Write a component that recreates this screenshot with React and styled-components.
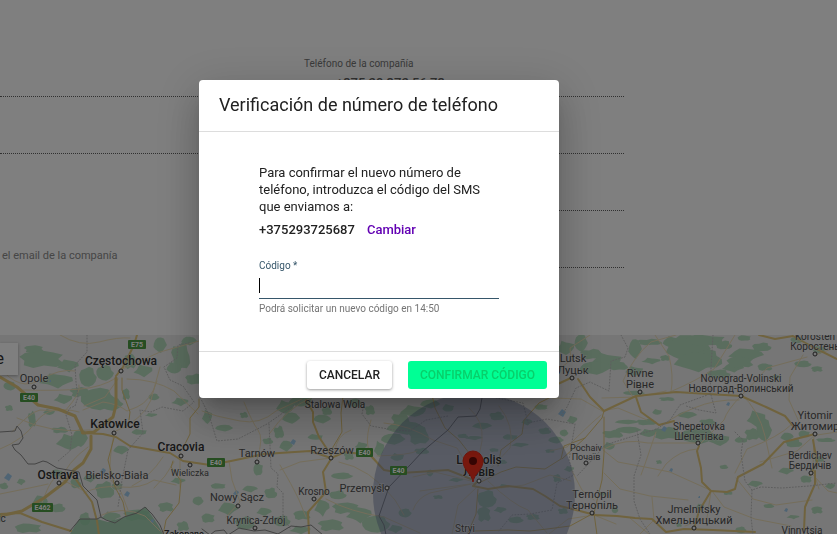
import React from "react";
import styled, { createGlobalStyle } from "styled-components";

const GlobalStyle = createGlobalStyle`
  *, *::before, *::after { box-sizing: border-box; }
  body {
    margin: 0;
    background: #fff;
    color: #212121;
    font-family: Roboto, "Liberation Sans", sans-serif;
    overflow: hidden;
  }
`;

const Page = styled.main`
  display: flex;
  flex-direction: column;
  min-height: 100vh;
`;

const Details = styled.section`
  display: grid;
  grid-template-columns: minmax(0, 284fr) minmax(0, 320fr) minmax(0, 193fr);
  column-gap: 20px;
  padding: 40px 0 67px;
`;

const Column = styled.div`
  display: flex;
  flex-direction: column;
`;

const Field = styled.div`
  display: flex;
  flex-direction: column;
  gap: 4px;
  height: 57px;
  padding-top: 17px;
  border-bottom: 1px ${(p) => (p.$line ? "dotted #616161" : "solid transparent")};
  font-size: 10px;
  line-height: 14px;
  color: #757575;
`;

const PhoneValue = styled.div`
  padding-left: 32px;
  font-size: 13px;
  font-weight: 500;
  line-height: 16px;
  color: #616161;
`;

const Hint = styled.div`
  padding: 38px 0 0 2px;
  font-size: 11px;
  line-height: 14px;
  color: #8c8c8c;
`;

const MapPanel = styled.section`
  position: relative;
  flex: 1;
  min-height: 199px;
  background: #ececec;
  overflow: hidden;
`;

const MapDrawing = styled.svg`
  display: block;
  width: 100%;
  height: 199px;
  font-family: Roboto, sans-serif;
`;

const MapType = styled.button`
  position: absolute;
  top: 8px;
  left: 0;
  display: flex;
  justify-content: flex-end;
  width: 18px;
  height: 32px;
  padding: 0 14px 0 0;
  border: 0;
  background: #fff;
  box-shadow: 0 1px 3px rgba(0, 0, 0, 0.3);
  color: #333;
  font: 400 16px/32px Roboto, sans-serif;
  overflow: hidden;
`;

const Backdrop = styled.div`
  position: fixed;
  inset: 0;
  display: grid;
  place-items: center;
  padding: 0 79px 56px 0;
  background: rgba(0, 0, 0, 0.5);
`;

const Dialog = styled.form`
  width: 360px;
  max-width: 100%;
  border-radius: 4px;
  background: #fff;
  box-shadow: 0 11px 15px -7px rgba(0, 0, 0, 0.2), 0 24px 38px 3px rgba(0, 0, 0, 0.14),
    0 9px 46px 8px rgba(0, 0, 0, 0.12);
`;

const Title = styled.h2`
  margin: 0;
  padding: 13px 20px 14px;
  border-bottom: 1px solid #ddd;
  font-size: 18px;
  font-weight: 400;
  line-height: 24px;
`;

const Content = styled.div`
  padding: 32px 60px 35px;
`;

const Message = styled.p`
  margin: 0;
  font-size: 13px;
  line-height: 17px;
`;

const PhoneRow = styled.div`
  display: flex;
  gap: 12px;
  margin-top: 6px;
  font-size: 13px;
  font-weight: 500;
  line-height: 17px;
`;

const ChangeLink = styled.a`
  color: #6200b3;
  text-decoration: none;
`;

const CodeField = styled.div`
  position: relative;
  display: flex;
  flex-direction: column;
  margin-top: 21px;
`;

const CodeLabel = styled.label`
  font-size: 10px;
  line-height: 14px;
  color: #36566a;
`;

const CodeInput = styled.input`
  width: 100%;
  height: 26px;
  padding: 0;
  border: 0;
  border-bottom: 1px solid #36566a;
  border-radius: 0;
  outline: 0;
  background: transparent;
  caret-color: transparent;
  font: 400 13px/17px Roboto, sans-serif;
`;

const Caret = styled.span`
  position: absolute;
  top: 19px;
  left: 0;
  width: 1px;
  height: 15px;
  background: #000;
`;

const Helper = styled.small`
  margin-top: 3px;
  font-size: 10px;
  line-height: 14px;
  color: #757575;
`;

const Actions = styled.footer`
  display: flex;
  justify-content: flex-end;
  gap: 16px;
  padding: 9px 12px;
  border-top: 1px solid #ddd;
`;

const Button = styled.button`
  height: 28px;
  padding: 0 12px;
  border: 0;
  border-radius: 3px;
  background: ${(p) => (p.$primary ? "#00ff95" : "#fff")};
  color: ${(p) => (p.$primary ? "#08cf6b" : "#212121")};
  box-shadow: ${(p) => (p.$primary ? "none" : "0 1px 3px rgba(0, 0, 0, 0.4)")};
  font: 500 12px/28px Roboto, sans-serif;
  text-transform: uppercase;
`;

/* Forests: centre x, centre y, half width, half height */
const forests = [
  [42, 359, 23, 9], [68, 366, 10, 6], [88, 377, 8, 9], [34, 349, 10, 4], [56, 381, 16, 7],
  [105, 373, 8, 7], [130, 361, 6, 8], [143, 371, 9, 6], [98, 399, 16, 10], [80, 392, 10, 5],
  [63, 399, 9, 5], [111, 404, 11, 6], [32, 419, 4, 8], [69, 442, 13, 8], [80, 438, 7, 8],
  [60, 430, 8, 3], [49, 412, 6, 3], [160, 345, 6, 7], [181, 356, 9, 13], [174, 368, 8, 6],
  [189, 341, 7, 4], [195, 379, 9, 5], [139, 432, 8, 3], [121, 450, 7, 4], [105, 490, 9, 8],
  [117, 486, 6, 4], [90, 478, 6, 4], [76, 483, 5, 5], [57, 473, 6, 4], [40, 502, 7, 6],
  [58, 508, 7, 4], [28, 528, 14, 5], [21, 482, 4, 3], [4, 486, 4, 3], [137, 515, 14, 6],
  [111, 517, 9, 5], [85, 519, 5, 6], [166, 507, 8, 5], [178, 481, 7, 3], [154, 397, 5, 3],
  [126, 394, 4, 6], [180, 402, 8, 4], [10, 386, 6, 4], [9, 408, 4, 3], [151, 415, 6, 2],
  [198, 501, 5, 4], [183, 526, 6, 5], [207, 417, 5, 7], [224, 428, 8, 3], [244, 415, 4, 3],
  [285, 407, 9, 7], [291, 418, 8, 5], [279, 432, 5, 6], [300, 401, 12, 6], [322, 419, 8, 4],
  [327, 411, 5, 4], [315, 437, 8, 3], [286, 446, 6, 5], [268, 441, 5, 3], [258, 469, 5, 7],
  [250, 489, 7, 3], [271, 493, 6, 5], [218, 486, 8, 3], [228, 509, 9, 6], [245, 523, 9, 6],
  [208, 518, 7, 5], [264, 512, 7, 4], [282, 521, 8, 5], [302, 515, 9, 5], [322, 508, 7, 8],
  [338, 495, 8, 4], [346, 508, 14, 6], [359, 515, 12, 8], [376, 524, 13, 8], [331, 525, 13, 6],
  [300, 530, 10, 4], [342, 476, 10, 3], [349, 456, 5, 4], [361, 446, 6, 4], [355, 403, 6, 4],
  [370, 410, 5, 5], [379, 449, 5, 8], [393, 439, 11, 5], [401, 420, 9, 8], [413, 411, 13, 6],
  [430, 404, 9, 4], [419, 435, 10, 9], [397, 457, 7, 4], [405, 428, 17, 6], [422, 451, 7, 3],
  [448, 408, 6, 4], [482, 426, 9, 3], [497, 416, 7, 4], [510, 437, 8, 3], [527, 422, 5, 3],
  [545, 431, 6, 3], [541, 407, 7, 3], [474, 438, 8, 2], [463, 436, 5, 2], [494, 450, 5, 2],
  [520, 445, 8, 2], [502, 462, 5, 2], [550, 451, 5, 2], [456, 480, 7, 2], [487, 499, 9, 8],
  [484, 514, 7, 8], [500, 510, 6, 3], [516, 520, 7, 3], [533, 517, 7, 3], [395, 529, 7, 4],
  [405, 513, 6, 4], [438, 497, 5, 2], [503, 486, 4, 2], [430, 473, 3, 3], [563, 511, 5, 3],
  [565, 348, 9, 7], [581, 343, 6, 8], [592, 354, 11, 5], [606, 361, 15, 8], [595, 368, 14, 6],
  [618, 366, 10, 4], [634, 371, 9, 5], [635, 349, 6, 9], [650, 342, 12, 3], [673, 342, 11, 6],
  [688, 349, 20, 13], [705, 359, 17, 9], [704, 340, 21, 6], [696, 362, 20, 9], [724, 345, 8, 4],
  [744, 338, 7, 3], [746, 355, 16, 6], [762, 347, 9, 4], [765, 367, 8, 4], [733, 368, 10, 4],
  [719, 374, 11, 4], [740, 362, 14, 6],
  [776, 377, 5, 2], [803, 364, 8, 3], [817, 369, 6, 3], [819, 350, 6, 4], [797, 340, 6, 3],
  [665, 358, 5, 3], [651, 361, 9, 3], [634, 393, 10, 2], [667, 399, 8, 2], [756, 419, 9, 8],
  [764, 430, 7, 10], [752, 434, 7, 6], [719, 440, 10, 6], [698, 436, 17, 7], [667, 433, 14, 6],
  [648, 433, 9, 4], [628, 430, 12, 3], [613, 434, 10, 4], [609, 446, 6, 4], [627, 422, 11, 2],
  [647, 422, 10, 3], [657, 412, 5, 3], [687, 415, 9, 3], [708, 422, 8, 3], [741, 440, 7, 3],
  [787, 437, 6, 4], [794, 443, 8, 4], [804, 434, 6, 4], [786, 471, 7, 3], [826, 440, 9, 2],
  [806, 479, 6, 4], [755, 484, 7, 3], [724, 467, 4, 2], [728, 493, 5, 2], [700, 507, 4, 3],
  [769, 506, 5, 2], [817, 510, 6, 4], [793, 517, 6, 2], [741, 530, 5, 3], [679, 525, 3, 2],
  [602, 494, 4, 2], [615, 510, 3, 3], [659, 462, 3, 2], [572, 420, 5, 4], [564, 433, 4, 3],
  [557, 478, 4, 4], [569, 469, 5, 3], [556, 440, 7, 3], [819, 459, 5, 3], [830, 486, 5, 3],
];

const forestPath = ([cx, cy, rx, ry], seed) => {
  const points = [];
  for (let k = 0; k < 13; k += 1) {
    const a = (k / 13) * Math.PI * 2;
    const r = 0.7 + 0.45 * Math.abs(Math.sin(seed * 7.3 + k * k * 2.1));
    points.push(`${Math.round((cx + Math.cos(a) * rx * r) * 10) / 10} ${Math.round((cy + Math.sin(a) * ry * r) * 10) / 10}`);
  }
  return `M${points.join("L")}Z`;
};

const lakes = [
  [8, 477, 4], [127, 494, 3], [152, 521, 2], [50, 381, 1], [236, 493, 3], [293, 442, 3],
  [562, 413, 4], [664, 429, 3], [728, 404, 2], [671, 470, 2], [786, 510, 2], [699, 497, 1], [103, 471, 3],
];

const thinRoads = [
  "M0 368Q20 392 40 380T75 371M60 335Q80 347 99 342T130 338M23 390Q60 391 81 389T116 378",
  "M12 432Q30 412 40 410L65 411Q82 392 79 385M17 418Q51 434 90 430",
  "M0 449Q23 440 36 422T79 412M83 410L103 402Q118 404 127 411L137 407Q151 401 157 381",
  "M118 379Q110 390 105 397L84 406M127 379Q154 379 174 391L198 414M118 371L160 352L199 341",
  "M114 434Q109 457 110 479L121 492L128 510M114 432Q143 420 151 400L160 367",
  "M59 483Q67 462 88 447M42 503Q52 474 59 478L82 490M0 494Q35 487 48 484",
  "M84 493Q99 485 120 487T154 480L176 485M99 516Q122 505 145 516L160 531",
  "M174 462L165 476L154 488M163 457Q150 477 132 486M180 451L180 487",
  "M229 461L232 480L240 502L226 517M257 459Q264 438 258 430T244 402M202 411L217 416L240 421Q260 425 276 411L302 399",
  "M280 465Q292 485 299 500L306 517M335 452Q336 435 351 430M311 398Q287 408 270 433",
  "M331 458L300 462L280 470M339 462Q370 468 395 500L404 515M326 499Q350 512 384 517L420 533",
  "M377 456Q410 455 417 451M371 420Q362 449 375 459M384 423Q409 425 433 440L457 448L473 475",
  "M469 408Q484 421 482 441L475 475M499 406Q515 426 510 448L481 479",
  "M413 477L435 472L471 481M420 491L470 484M413 510Q417 498 430 493L476 483",
  "M488 481Q513 505 528 510L547 533M476 488L458 505L452 534M501 488L524 485L550 475L571 481",
  "M554 373L571 360L570 348L590 335M604 412L581 399L552 398M602 398L637 397L666 391",
  "M602 411L618 408L647 420M633 397L623 381Q633 357 651 342L676 335",
  "M671 392Q674 376 669 356L655 335M670 392Q696 381 714 369L735 335M741 396Q757 380 767 368L807 357",
  "M741 396Q727 410 724 420L701 443M739 400Q715 399 694 408T669 421",
  "M741 394Q759 410 765 436L772 468M792 424Q779 437 747 449L735 473M601 415Q590 424 567 447L550 451",
  "M603 450L618 462L645 467L670 472L710 490M606 448Q625 438 648 443L698 443",
  "M604 473L620 489L650 496L688 500M652 497L654 520L640 534M656 432L645 464L641 475",
  "M711 491L707 518L685 526M712 491L724 507L755 519L791 526M736 478L753 499L776 505L812 500",
  "M697 449Q680 450 666 464L658 476M816 434L797 451L760 462M817 435L837 432M814 433L813 470L819 489",
  "M800 424L789 400L790 377L803 355M815 355L837 347M813 475L828 491L837 493",
  "M594 500L582 490L572 471M549 534L568 519L594 515L616 524M630 518L650 535",
];

const mainRoads = [
  ["M116 378L116 405L113 417L94 432L83 433L75 416L58 409L38 405L17 387L0 377", 3],
  ["M82 433L103 434L116 437L130 446L170 453L183 461L210 465L231 461L264 454L310 451L331 458L345 452L370 455L384 470L401 473L448 470L471 479", 2],
  ["M91 436L91 449L83 463L74 470L65 482L44 498L22 511L0 516", 3],
  ["M114 438L108 460L115 487L123 502L126 516", 1],
  ["M122 378L122 390L130 412L129 420", 1],
  ["M134 345L137 335M134 345L123 367L116 376", 2],
  ["M0 514L20 513L42 522L71 531M75 478L84 491L92 502L97 521L99 535", 2],
  ["M199 399L199 407L190 418L190 434L183 448M173 461L171 467L181 481L179 503L166 520L163 535", 1],
  ["M343 396L341 413L342 432L333 447L331 457", 1],
  ["M306 400L313 412L313 422L319 437L331 455M331 459L323 472L326 492L308 512L309 535", 2],
  ["M432 395L435 408L445 428L459 440L476 462", 1],
  ["M555 395L539 403L524 420L522 434L501 450L498 466M479 483L501 472L516 467L545 469L561 459L564 446L585 438", 1],
  ["M477 482L473 486L488 489L508 486L533 489L545 496L560 506L580 511L595 515", 2],
  ["M478 489L476 514L467 535M475 531L508 530L530 531L547 529L570 526L592 514", 1],
  ["M578 379L590 397L604 411L636 396L676 392L741 396L766 407L785 416L794 427", 2],
  ["M636 397L641 412L659 425L674 421", 2],
  ["M604 411L602 418L585 438L562 459M604 417L604 453L602 480L594 513L597 535", 1],
  ["M553 387L560 383L573 377", 2],
  ["M699 446L697 451L701 468L702 482L711 491L699 511L694 529", 2],
  ["M711 491L727 492L735 489L738 477L763 464L784 442L815 434", 2],
  ["M815 471L815 484L805 507L804 530M813 440L817 462L810 475", 2],
  ["M594 515L617 516L635 518L652 519L666 532L684 529L713 530L755 532", 2],
  ["M759 335L775 339L793 336L811 346L837 359", 2],
];

const borders = [
  "M0 432L15 431L17 426L21 431L23 438L19 444L12 445L15 450L21 455L28 464L35 464L43 461L47 462L57 468L79 472L83 486L97 500L101 517L97 519L80 519L70 531",
  "M101 517L106 520L115 523L124 517L137 513L145 507L152 514L160 525L164 535M202 529L210 535L215 531L224 530L228 535L239 528L254 531L265 530L278 534L291 526L301 527L311 525L323 535",
  "M482 398L480 409L476 416L458 417L448 430L423 451L410 465L389 487L379 516L384 525L386 535",
];

const regions = [
  "M87 335L87 352L75 365L76 382L78 397L75 406L70 408L66 415L72 435L70 451L57 462",
  "M189 343L178 345L177 358L164 367L170 380L183 386L194 402L183 411L162 407L151 412L140 410L143 433L128 450L122 480L118 507",
  "M199 395L209 415L217 441L238 439L267 424L303 399M269 424L271 468L278 474L277 487L283 493L283 518L290 528",
  "M364 404L362 414L371 426L394 430L410 431L426 420L448 416M496 398L523 403L528 423L547 419L575 424L569 460L574 475L557 483L552 510L530 514L512 515L499 531",
  "M621 335L628 348L625 357L611 361L609 391L590 382L576 388L567 407L561 416",
  "M713 335L711 368L710 394L680 405L670 420L657 429L640 434L605 445L594 458L577 476",
  "M711 395L716 413L699 410L686 406M637 431L641 455L634 476L634 501L640 519L650 534",
  "M735 432L743 440L741 454L745 481L752 490L761 487L782 488L809 486L837 483M752 490L751 517L753 535",
];

const labels = [
  ["Częstochowa", 121, 365, 12, 500], ["Opole", 34, 382, 11, 400], ["Katowice", 115, 428, 12, 500],
  ["Cracovia", 181, 451, 12, 500], ["Wieliczka", 190, 476, 9, 400], ["Ostrava", 58, 479, 12, 500],
  ["Bielsko-Biała", 117, 479, 11, 400], ["Zakopane", 184, 537, 9, 500], ["ic", 2, 522, 10, 400],
  ["Stalowa Wola", 335, 408, 10, 400], ["Tarnów", 257, 457, 11, 400], ["Rzeszów", 332, 454, 11, 400],
  ["Nowy Sącz", 237, 501, 11, 400], ["Krosno", 314, 495, 10, 400], ["Przemyśl", 362, 492, 11, 400],
  ["Krynica-Zdrój", 256, 524, 10, 400], ["Leópolis", 479, 464, 12, 500], ["Львів", 479, 476, 12, 500],
  ["Stryi", 465, 532, 10, 400], ["Lutsk", 573, 362, 11, 400], ["Луцьк", 573, 374, 11, 400],
  ["Rivne", 640, 377, 11, 400], ["Рівне", 640, 388, 11, 400], ["Pochaiv", 586, 451, 9, 400],
  ["Почаїв", 586, 460, 9, 400], ["Novograd-Volinski", 741, 382, 10, 400],
  ["Новоград-Волинський", 741, 392, 10, 400], ["Korosten", 815, 340, 10, 400], ["Коростень", 815, 350, 10, 400],
  ["Shepetovka", 699, 430, 10, 400], ["Шепетівка", 699, 440, 10, 400], ["Yitomir", 815, 419, 11, 400],
  ["Житомир", 815, 430, 11, 400], ["Berdichev", 810, 459, 10, 400], ["Бердичів", 810, 469, 10, 400],
  ["Ternópil", 592, 498, 11, 400], ["Тернопіль", 592, 509, 11, 400], ["Jmelnitsky", 694, 513, 11, 400],
  ["Хмельницький", 694, 524, 11, 400], ["Vinnytsia", 802, 534, 10, 400],
];

const towns = [
  [121, 371], [34, 387], [114, 433], [181, 456], [190, 465], [59, 483], [117, 483], [257, 462],
  [331, 458], [238, 506], [314, 499], [387, 488], [255, 528], [479, 481], [572, 378], [640, 392],
  [586, 463], [741, 396], [815, 354], [698, 443], [815, 434], [811, 473], [592, 513], [694, 528],
];

const shields = [["E75", 128, 340, 18], ["E40", 20, 393, 18], ["E462", 32, 503, 21], ["E40", 207, 458, 18], ["E40", 356, 448, 17], ["E40", 390, 466, 17]];

function CoverageMap() {
  return (
    <MapPanel aria-label="Mapa">
      <MapDrawing viewBox="0 335 837 199" preserveAspectRatio="xMidYMin slice" aria-hidden="true">
        <rect x="0" y="335" width="837" height="199" fill="#ececec" />
        <g fill="#b4dabc">
          {forests.map((f, i) => <path key={i} d={forestPath(f, i)} />)}
        </g>
        <path d="M70 534L79 519H97L108 522L124 517L146 507L158 525L163 534Z" fill="#94cba5" opacity=".8" />
        <g fill="#9fc9e8">
          {lakes.map(([x, y, r]) => <path key={`${x}-${y}`} d={`M${x - r} ${y + 1}L${x} ${y - r}L${x + r} ${y - 1}L${x + 1} ${y + r}Z`} />)}
        </g>
        <g fill="none" strokeLinejoin="round" strokeLinecap="round">
          {thinRoads.map((d) => <path key={d} d={d} stroke="#ebdcb6" strokeWidth="1" />)}
          {mainRoads.map(([d, w]) => <path key={d} d={d} stroke="#e0c67c" strokeWidth={w} />)}
          {regions.map((d) => <path key={d} d={d} stroke="#bdbdbd" strokeWidth="1" strokeDasharray="1 2" />)}
          {borders.map((d) => <path key={d} d={d} stroke="#888" strokeWidth="1" />)}
        </g>
        <circle cx="474" cy="494" r="101" fill="#5b6a94" fillOpacity=".4" />
        {shields.map(([name, x, y, w]) => (
          <g key={`${x}-${y}`}>
            <rect x={x} y={y} width={w} height="9" rx="1" fill="#4c9a42" />
            <text x={x + w / 2} y={y + 7} textAnchor="middle" fontSize="7" fontWeight="700" fill="#fff">{name}</text>
          </g>
        ))}
        {towns.map(([x, y]) => <circle key={`${x}-${y}`} cx={x} cy={y} r="2" fill="#eee" stroke="#3c3c3c" strokeWidth="1" />)}
        {labels.map(([name, x, y, size, weight]) => (
          <text key={name} x={x} y={y} textAnchor="middle" fontSize={size} fontWeight={weight}
            fill={weight === 500 ? "#303030" : "#505050"} stroke="#f3f3f3" strokeWidth="1" strokeOpacity=".5" paintOrder="stroke">
            {name}
          </text>
        ))}
        <path d="M473 482C472 474 463 470 463 461A10 10 0 0 1 483 461C483 470 474 474 473 482Z" fill="#f0301c" stroke="#dc2c1c" strokeWidth="1" />
        <circle cx="473" cy="461" r="4" fill="#6b0b06" />
      </MapDrawing>
      <MapType type="button">e</MapType>
    </MapPanel>
  );
}

function VerificationDialog() {
  return (
    <Backdrop>
      <Dialog role="dialog" aria-modal="true" aria-labelledby="dialog-title" onSubmit={(e) => e.preventDefault()}>
        <Title id="dialog-title">Verificación de número de teléfono</Title>
        <Content>
          <Message>
            Para confirmar el nuevo número de teléfono, introduzca el código del SMS que enviamos a:
          </Message>
          <PhoneRow>
            <span>+375293725687</span>
            <ChangeLink href="#cambiar">Cambiar</ChangeLink>
          </PhoneRow>
          <CodeField>
            <CodeLabel htmlFor="code">Código *</CodeLabel>
            <CodeInput id="code" type="text" inputMode="numeric" autoFocus required aria-describedby="code-help" />
            <Caret />
            <Helper id="code-help">Podrá solicitar un nuevo código en 14:50</Helper>
          </CodeField>
        </Content>
        <Actions>
          <Button type="button">Cancelar</Button>
          <Button type="submit" $primary disabled>Confirmar código</Button>
        </Actions>
      </Dialog>
    </Backdrop>
  );
}

export default function App() {
  return (
    <>
      <GlobalStyle />
      <Page>
        <Details>
          <Column>
            <Field $line />
            <Field $line />
            <Field />
            <Hint>el email de la companía</Hint>
          </Column>
          <Column>
            <Field $line>
              Teléfono de la compañía
              <PhoneValue>+375 29 372 56 73</PhoneValue>
            </Field>
            <Field $line />
            <Field $line />
            <Field $line />
          </Column>
        </Details>
        <CoverageMap />
      </Page>
      <VerificationDialog />
    </>
  );
}
